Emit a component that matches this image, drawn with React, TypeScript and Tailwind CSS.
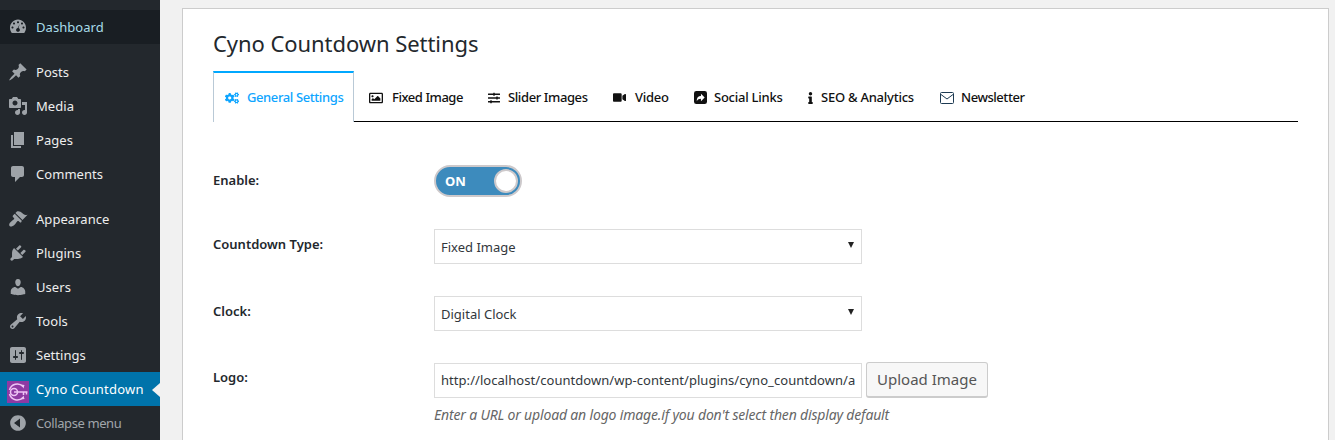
import React from 'react';
import { FaCogs, FaRegImage, FaSlidersH, FaVideo, FaInfo } from 'react-icons/fa';

const dashPaths: Record<string, string> = {
  dashboard: 'M3.76 16h12.48c1.1-1.43 1.76-3.21 1.76-5.14C18 6.3 14.42 2.6 10 2.6S2 6.3 2 10.86c0 1.93.66 3.71 1.76 5.14zM10 4.26c.57 0 1.03.46 1.03 1.03S10.57 6.32 10 6.32 8.97 5.86 8.97 5.29 9.43 4.26 10 4.26zM6 5.5c.57 0 1.03.46 1.03 1.03S6.57 7.56 6 7.56 4.97 7.1 4.97 6.53 5.43 5.5 6 5.5zm8 0c.57 0 1.03.46 1.03 1.03S14.57 7.56 14 7.56s-1.03-.46-1.03-1.03S13.43 5.5 14 5.5zM4.5 9.4c.57 0 1.03.46 1.03 1.03s-.46 1.03-1.03 1.03-1.03-.46-1.03-1.03.46-1.03 1.03-1.03zm11 0c.57 0 1.03.46 1.03 1.03s-.46 1.03-1.03 1.03-1.03-.46-1.03-1.03.46-1.03 1.03-1.03zM11.7 7l-1.2 4.1c.8.2 1.4.9 1.4 1.8 0 1-.85 1.85-1.9 1.85s-1.9-.85-1.9-1.85c0-.95.7-1.7 1.6-1.85z',
  posts: 'M10.44 3.02l1.82-1.82 6.36 6.35-1.83 1.82c-1.05-.68-2.48-.57-3.41.36l-.75.75c-.92.93-1.04 2.35-.35 3.4l-1.83 1.82-2.41-2.41-2.8 2.79c-.42.42-3.38 2.71-3.8 2.29s1.86-3.39 2.28-3.81l2.79-2.79L4.1 9.36l1.83-1.82c1.05.69 2.48.57 3.4-.36l.75-.75c.93-.92 1.05-2.35.36-3.41z',
  media: 'M13 11V4c0-.55-.45-1-1-1h-1.67L9 1H5L3.67 3H2c-.55 0-1 .45-1 1v7c0 .55.45 1 1 1h10c.55 0 1-.45 1-1zM7 4.5c1.38 0 2.5 1.12 2.5 2.5S8.38 9.5 7 9.5 4.5 8.38 4.5 7 5.62 4.5 7 4.5zM14 6h5v10.5c0 1.38-1.12 2.5-2.5 2.5S14 17.88 14 16.5s1.12-2.5 2.5-2.5c.17 0 .34.02.5.05V9h-3V6zm-4 8.05V13h2v3.5c0 1.38-1.12 2.5-2.5 2.5S7 17.88 7 16.5 8.12 14 9.5 14c.17 0 .34.02.5.05z',
  pages: 'M6 15V2h10v13H6zm-1 1h8v2H3V5h2v11z',
  comments: 'M5 2h9c1.1 0 2 .9 2 2v7c0 1.1-.9 2-2 2h-2l-5 5v-5H5c-1.1 0-2-.9-2-2V4c0-1.1.9-2 2-2z',
  appearance: 'M14.48 11.06L7.41 3.99l1.5-1.5c.5-.56 2.3-.47 3.51.32 1.21.8 1.43 1.28 2.91 2.1 1.18.64 2.45 1.26 4.23.91zm-.71.71L6.7 4.7 4.93 6.47c-.39.39-.39 1.02 0 1.41l1.06 1.06c.39.39.39 1.03 0 1.42-.6.6-1.43 1.11-2.21 1.69-.35.26-.7.53-1.01.84C1.43 13.73.9 15.41 1.28 16.51c.15.43.49.77.92.92 1.1.38 2.78-.15 4.62-1.99.31-.31.58-.66.84-1.01.58-.78 1.09-1.61 1.69-2.21.39-.39 1.03-.39 1.42 0l1.06 1.06c.39.39 1.02.39 1.41 0z',
  plugins: 'M13.11 4.36L9.87 7.6 8 5.73l3.24-3.24c.35-.34 1.05-.2 1.56.32.52.51.66 1.21.31 1.55zm-8 1.77l.91-1.12 9.01 9.01-1.19.84c-.71.71-2.63 1.16-3.82 1.16H6.14L4.9 17.26c-.59.59-1.54.59-2.12 0-.59-.58-.59-1.53 0-2.12l1.24-1.24v-3.88c0-1.13.4-3.05 1.09-3.89zm7.26 3.97l3.24-3.24c.34-.35 1.04-.21 1.55.31.52.51.66 1.21.31 1.55l-3.24 3.25z',
  users: 'M10 9.25c-2.27 0-2.73-3.44-2.73-3.44C7 4.02 7.82 2 9.97 2c2.16 0 2.98 2.02 2.71 3.81 0 0-.41 3.44-2.68 3.44zm0 2.57L12.72 10c2.39 0 4.52 2.33 4.52 4.53v2.49s-3.65 1.13-7.24 1.13c-3.65 0-7.24-1.13-7.24-1.13v-2.49c0-2.25 1.94-4.48 4.47-4.48z',
  tools: 'M16.68 9.77c-1.34 1.34-3.3 1.67-4.95.99l-5.41 6.52c-.99.99-2.59.99-3.57 0-.99-.98-.99-2.58 0-3.57l6.52-5.42c-.68-1.65-.35-3.61.99-4.95 1.28-1.28 3.12-1.62 4.72-1.06l-2.89 2.89 2.82 2.82 2.86-2.87c.53 1.58.18 3.41-1.09 4.67zM3.81 16.21c.4.39 1.03.39 1.42 0 .4-.4.4-1.03 0-1.43-.39-.39-1.02-.39-1.42 0-.39.4-.39 1.03 0 1.43z',
  settings: 'M18 16V4c0-1.1-.9-2-2-2H4c-1.1 0-2 .9-2 2v12c0 1.1.9 2 2 2h12c1.1 0 2-.9 2-2zM8 11h1c.55 0 1 .45 1 1s-.45 1-1 1H8v1.5c0 .28-.22.5-.5.5s-.5-.22-.5-.5V13H6c-.55 0-1-.45-1-1s.45-1 1-1h1V5.5c0-.28.22-.5.5-.5s.5.22.5.5V11zm5-2h-1c-.55 0-1-.45-1-1s.45-1 1-1h1V5.5c0-.28.22-.5.5-.5s.5.22.5.5V7h1c.55 0 1 .45 1 1s-.45 1-1 1h-1v5.5c0 .28-.22.5-.5.5s-.5-.22-.5-.5V9z',
  collapse: 'M10 2.16c4.33 0 7.84 3.51 7.84 7.84s-3.51 7.84-7.84 7.84S2.16 14.33 2.16 10 5.67 2.16 10 2.16zM12 14.5v-9L6 10z',
};

const DashIcon = ({ name }: { name: string }) => (
  <svg viewBox="0 0 20 20" className="w-5 h-5 fill-[#9ea3a8]">
    <path fillRule="evenodd" d={dashPaths[name]} />
  </svg>
);

const CynoIcon = () => (
  <svg viewBox="0 0 22 22" className="w-[22px] h-[22px] ml-[-1px] mt-[6px] shrink-0">
    <rect width="22" height="22" fill="#8e3aa3" />
    <g fill="none" stroke="#eec4f5" strokeWidth="1.5">
      <path d="M16 5.5A8 8 0 002.5 9M2.5 13A8 8 0 0016 16.5" />
      <circle cx="7" cy="11" r="3.5" />
      <path d="M7 11H20.5M16.500 11v3M19.500 11v2.500" />
    </g>
    <path d="M14 3.5l3.5.5-1 3.5zM14 18.5l3.5-.5-1-3.5z" fill="#eec4f5" />
  </svg>
);

const menuTop = [
  { key: 'posts', label: 'Posts' },
  { key: 'media', label: 'Media' },
  { key: 'pages', label: 'Pages' },
  { key: 'comments', label: 'Comments' },
];
const menuBottom = [
  { key: 'appearance', label: 'Appearance' },
  { key: 'plugins', label: 'Plugins' },
  { key: 'users', label: 'Users' },
  { key: 'tools', label: 'Tools' },
  { key: 'settings', label: 'Settings' },
];

const MenuItem = ({ icon, label }: { icon: string; label: string }) => (
  <div className="flex items-center h-[34px] pl-[8px] text-[#eeeeee]">
    <span className="w-[28px] shrink-0 flex"><DashIcon name={icon} /></span>
    <span className="pt-[2px]">{label}</span>
  </div>
);

const Sidebar = () => (
  <aside className="w-[160px] h-[440px] shrink-0 bg-[#23282d] overflow-hidden text-[13px] tracking-[0.05px]">
    <div className="h-[10px]" />
    <div className="flex items-center h-[34px] pl-[8px] bg-[#191e23] text-[#a8dcea]">
      <span className="w-[28px] shrink-0 flex"><DashIcon name="dashboard" /></span>
      <span className="pt-[2px]">Dashboard</span>
    </div>
    <div className="h-[11px]" />
    {menuTop.map((m) => <MenuItem key={m.key} icon={m.key} label={m.label} />)}
    <div className="h-[11px]" />
    {menuBottom.map((m) => <MenuItem key={m.key} icon={m.key} label={m.label} />)}
    <div className="relative flex items-center h-[34px] pl-[8px] bg-[#0073aa] text-white">
      <span className="w-[28px] shrink-0 flex"><CynoIcon /></span>
      <span className="pt-[2px] tracking-[0.2px]">Cyno Countdown</span>
      <span className="absolute right-0 top-[11px] border-y-[7px] border-y-transparent border-r-[8px] border-r-[#f1f1f1]" />
    </div>
    <div className="flex items-center h-[34px] pl-[8px] text-[#a0a5aa]">
      <span className="w-[28px] shrink-0 flex"><DashIcon name="collapse" /></span>
      <span className="pt-[2px] tracking-[-0.4px]">Collapse menu</span>
    </div>
  </aside>
);

const SocialIcon = () => (
  <svg viewBox="0 0 14 14" className="w-[13px] h-[13px]">
    <rect width="14" height="14" rx="2.5" fill="#111111" />
    <path d="M3 11c-.3-3.5 1.5-5.5 4.5-5.5V3l4 4-4 4V8.3C5.5 8.3 4 9 3 11z" fill="#ffffff" />
  </svg>
);

const EnvelopeIcon = () => (
  <svg viewBox="0 0 14 12" className="w-[14px] h-[12px]" fill="none" stroke="#1d3a52" strokeWidth="1">
    <rect x="0.5" y="0.5" width="13" height="11" rx="1" />
    <path d="M1 2.5l6 4.5 6-4.5" />
  </svg>
);

const tabs = [
  { label: 'Fixed Image', icon: <FaRegImage size={14} />, slot: 'w-[23px]', width: 'w-[119px] tracking-[-0.45px]' },
  { label: 'Slider Images', icon: <FaSlidersH size={12} />, slot: 'w-[20px]', width: 'w-[125px] tracking-[-0.4px]' },
  { label: 'Video', icon: <FaVideo size={13} />, slot: 'w-[22px]', width: 'w-[81px]' },
  { label: 'Social Links', icon: <SocialIcon />, slot: 'w-[20px]', width: 'w-[114px]' },
  { label: 'SEO & Analytics', icon: <FaInfo className="w-[5px] h-[12px]" />, slot: 'w-[13px]', width: 'w-[132px]' },
  { label: 'Newsletter', icon: <EnvelopeIcon />, slot: 'w-[21px]', width: 'w-[110px] tracking-[-0.45px]' },
];

const Tabs = () => (
  <div className="flex h-[51px] mt-[13px] border-b border-black text-[13px] font-medium tracking-[-0.25px]">
    <div className="flex items-center h-[51px] w-[141px] pl-[11px] bg-white border-x border-[#b9c9d6] border-t-2 border-t-[#00a8ff] text-[#0ea5ff] tracking-[-0.4px]">
      <span className="w-[22px] flex"><FaCogs size={14} /></span>
      <span>General Settings</span>
    </div>
    {tabs.map((t) => (
      <div key={t.label} className={`flex items-center h-[51px] pt-[2px] pl-[15px] text-[#111111] whitespace-nowrap ${t.width}`}>
        <span className={`flex shrink-0 ${t.slot}`}>{t.icon}</span>
        <span>{t.label}</span>
      </div>
    ))}
  </div>
);

const Label = ({ children, lift = 'mb-[4px]' }: { children: React.ReactNode; lift?: string }) => (
  <div className={`w-[221px] shrink-0 text-[13px] font-semibold text-[#23282d] ${lift}`}>{children}</div>
);

const Select = ({ value }: { value: string }) => (
  <div className="flex items-center justify-between w-[428px] h-[35px] pl-[6px] pr-[7px] bg-white border border-[#dddddd] text-[13px] text-[#32373c]">
    <span className="pt-[2px]">{value}</span>
    <span className="mb-[3px] border-x-[3px] border-x-transparent border-t-[6px] border-t-[#222222]" />
  </div>
);

const App = () => (
  <div className="flex w-[1335px] h-[440px] overflow-hidden bg-[#f1f1f1] font-['Noto_Sans','Open_Sans',sans-serif]">
    <Sidebar />
    <main className="flex-1 pl-[22px] pr-[6px] pt-[8px]">
      <div className="h-[500px] bg-white border border-[#cccccc] px-[30px]">
        <h1 className="pt-[20px] text-[22px] leading-[29px] text-[#23282d] tracking-[-0.06px]">Cyno Countdown Settings</h1>
        <Tabs />
        <div className="flex items-center mt-[43px]">
          <Label lift="mb-0">Enable:</Label>
          <div className="flex items-center justify-between w-[88px] h-[32px] pl-[9px] pr-[2px] rounded-full bg-[#3d8bbd] border-2 border-[#cdc9cb] text-[13px] font-bold text-white">
            <span className="pt-[1px]">ON</span>
            <span className="w-[24px] h-[24px] rounded-full bg-white border-2 border-[#cdc9cb]" />
          </div>
        </div>
        <div className="flex items-center mt-[32px]">
          <Label>Countdown Type:</Label>
          <Select value="Fixed Image" />
        </div>
        <div className="flex items-center mt-[32px]">
          <Label>Clock:</Label>
          <Select value="Digital Clock" />
        </div>
        <div className="flex items-center mt-[31px]">
          <Label lift="mb-[4px]">Logo:</Label>
          <input
            readOnly
            value="http://localhost/countdown/wp-content/plugins/cyno_countdown/assets/images/logo.png"
            className="w-[428px] h-[35px] px-[6px] bg-white border border-[#dddddd] text-[13px] text-[#32373c] tracking-[0.05px] outline-none"
          />
          <button className="ml-[4px] h-[36px] w-[122px] bg-[#f7f7f7] border border-[#cccccc] border-b-2 rounded-[3px] text-[15px] text-[#555555]">Upload Image</button>
        </div>
        <p className="ml-[221px] mt-[6px] text-[14px] italic text-[#666666] tracking-[-0.17px]">Enter a URL or upload an logo image.if you don't select then display default</p>
      </div>
    </main>
  </div>
);

export default App;
